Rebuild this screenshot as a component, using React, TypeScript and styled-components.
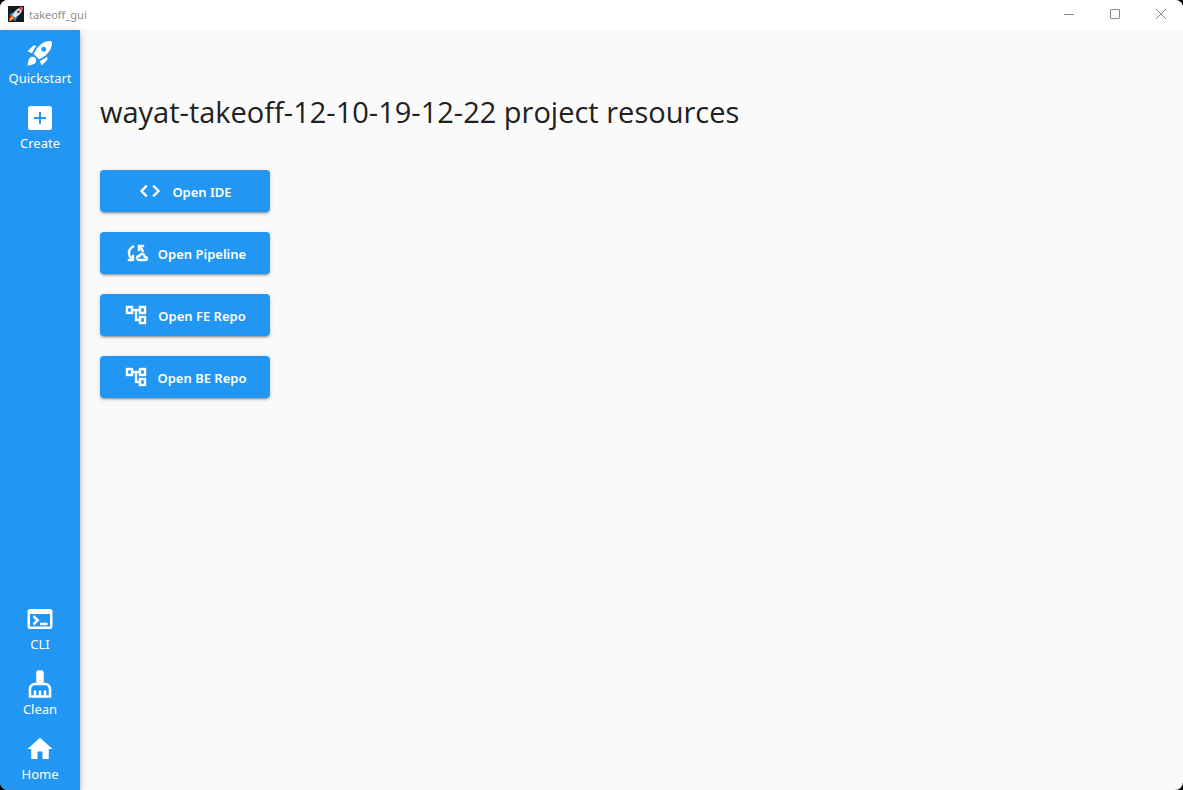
import React from 'react';
import styled, { createGlobalStyle } from 'styled-components';
import {
  MdCode,
  MdHome,
  MdOutlineAccountTree,
  MdOutlineCloudSync,
  MdRocketLaunch,
  MdTerminal,
  MdCleaningServices,
} from 'react-icons/md';

const GlobalStyle = createGlobalStyle`
  *, *::before, *::after { box-sizing: border-box; }
  body {
    margin: 0;
    background: #000;
    font-family: "Segoe UI", "Open Sans", "Noto Sans", sans-serif;
  }
`;

const Window = styled.div`
  display: flex;
  flex-direction: column;
  min-height: 100vh;
  overflow: hidden;
  border-radius: 8px;
  background: #fafafa;
`;

const TitleBar = styled.header`
  display: flex;
  align-items: center;
  height: 30px;
  padding-left: 8px;
  background: #fff;
  color: #8f8f8f;

  > svg {
    margin-bottom: 2px;
  }
`;

const AppName = styled.span`
  flex: 1;
  margin-left: 5px;
  font-family: "Noto Sans", sans-serif;
  font-size: 11px;
  line-height: 16px;
`;

const CaptionButton = styled.button`
  display: flex;
  align-items: center;
  justify-content: center;
  width: 46px;
  height: 30px;
  padding: 0 0 2px 2px;
  border: 0;
  background: none;
  color: #8a8a8a;
`;

const Body = styled.div`
  display: flex;
  flex: 1;
`;

const Sidebar = styled.nav`
  display: flex;
  flex-direction: column;
  justify-content: space-between;
  width: 80px;
  background: #2196f3;
  box-shadow: 0 2px 4px -1px rgba(0, 0, 0, 0.2), 0 4px 5px rgba(0, 0, 0, 0.14),
    0 1px 10px rgba(0, 0, 0, 0.12);
`;

const NavGroup = styled.div`
  display: flex;
  flex-direction: column;
`;

const NavItem = styled.button<{ $inset: number }>`
  display: flex;
  flex-direction: column;
  align-items: center;
  height: 65px;
  padding: ${({ $inset }) => $inset}px 0 0;
  border: 0;
  background: none;
  color: #fff;
  font-family: "Noto Sans", sans-serif;
  font-size: 13px;
  line-height: 20px;
  cursor: pointer;
`;

const Main = styled.main`
  flex: 1;
  padding: 60px 20px 20px;
`;

const Heading = styled.h1`
  margin: 0 0 36px;
  color: #212121;
  font-size: 29px;
  font-weight: 400;
  line-height: 44px;
`;

const Actions = styled.div`
  display: flex;
  flex-direction: column;
  align-items: flex-start;
  gap: 20px;
`;

const ActionButton = styled.button`
  display: flex;
  align-items: center;
  justify-content: center;
  gap: 10px;
  width: 170px;
  height: 42px;
  padding: 0;
  border: 0;
  border-radius: 4px;
  background: #2196f3;
  box-shadow: 0 3px 1px -2px rgba(0, 0, 0, 0.2), 0 2px 2px rgba(0, 0, 0, 0.14),
    0 1px 5px rgba(0, 0, 0, 0.12);
  color: #fff;
  font-family: "Noto Sans", sans-serif;
  font-size: 13px;
  font-weight: 600;
  line-height: 20px;
  cursor: pointer;

  svg {
    stroke: #fff;
    stroke-width: 0.4px;
  }

  svg [fill='none'] {
    stroke: none;
  }
`;

const ActionLabel = styled.span`
  padding-top: 2px;
`;

const AddBoxIcon = ({ size }: { size: number }) => (
  <svg width={size} height={size} viewBox="0 0 30 30" fill="currentColor" aria-hidden="true">
    <path
      fillRule="evenodd"
      d="M5.500 3h19A2.500 2.500 0 0 1 27 5.500v19a2.500 2.500 0 0 1-2.500 2.500h-19A2.500 2.500 0 0 1 3 24.500v-19A2.500 2.500 0 0 1 5.500 3zM14 9v5H9v2h5v5h2v-5h5v-2h-5V9z"
    />
  </svg>
);

type Entry = { label: string; icon: React.ComponentType<{ size: number }> };

const topItems: Entry[] = [
  { label: 'Quickstart', icon: MdRocketLaunch },
  { label: 'Create', icon: AddBoxIcon },
];

const bottomItems: Entry[] = [
  { label: 'CLI', icon: MdTerminal },
  { label: 'Clean', icon: MdCleaningServices },
  { label: 'Home', icon: MdHome },
];

const actions: Entry[] = [
  { label: 'Open IDE', icon: MdCode },
  { label: 'Open Pipeline', icon: MdOutlineCloudSync },
  { label: 'Open FE Repo', icon: MdOutlineAccountTree },
  { label: 'Open BE Repo', icon: MdOutlineAccountTree },
];

const AppLogo = () => (
  <svg width="16" height="16" viewBox="0 0 16 16" aria-hidden="true">
    <rect width="16" height="16" fill="#17191c" />
    <path d="M5 6 1.6 8.6 2 10.4 5.4 9zM9.6 10.4 7.4 15 5.6 14.6 6.6 11z" fill="#1e88d2" />
    <path d="M4 9.6C2 10.4 1 12.4.8 15.2 3.4 15 5.6 14 6.4 12z" fill="#f4511e" />
    <path d="M4.2 10.8C3 11.4 2.2 12.4 2 14c1.6-.2 2.6-.8 3.2-2z" fill="#ffca28" />
    <path d="M15 1C10.6 1.4 7 4 4.2 9.4l2.4 2.4C12 9.2 14.6 5.6 15 1z" fill="#dfe6ea" />
    <path d="M15 1c-1.6.1-3 .5-4.2 1.2l3 3C14.5 4 14.9 2.6 15 1z" fill="#d84343" />
    <circle cx="10.4" cy="5.8" r="1.5" fill="#d84343" />
    <circle cx="10.4" cy="5.8" r=".8" fill="#263c4c" />
  </svg>
);

const NavList = ({ items, inset }: { items: Entry[]; inset: number }) => (
  <NavGroup>
    {items.map(({ label, icon: Icon }) => (
      <NavItem key={label} type="button" $inset={inset}>
        <Icon size={30} />
        {label}
      </NavItem>
    ))}
  </NavGroup>
);

export default function App() {
  return (
    <>
      <GlobalStyle />
      <Window>
        <TitleBar>
          <AppLogo />
          <AppName>takeoff_gui</AppName>
          <CaptionButton type="button" aria-label="Minimize">
            <svg width="10" height="10" viewBox="0 0 10 10" fill="none" stroke="currentColor">
              <path d="M0 5.5h10" />
            </svg>
          </CaptionButton>
          <CaptionButton type="button" aria-label="Maximize">
            <svg width="10" height="10" viewBox="0 0 10 10" fill="none" stroke="currentColor">
              <rect x=".5" y=".5" width="9" height="9" rx=".5" />
            </svg>
          </CaptionButton>
          <CaptionButton type="button" aria-label="Close">
            <svg width="10" height="10" viewBox="0 0 10 10" fill="none" stroke="currentColor">
              <path d="M0 0l10 10M10 0L0 10" />
            </svg>
          </CaptionButton>
        </TitleBar>
        <Body>
          <Sidebar>
            <NavList items={topItems} inset={8} />
            <NavList items={bottomItems} inset={9} />
          </Sidebar>
          <Main>
            <Heading>wayat-takeoff-12-10-19-12-22 project resources</Heading>
            <Actions>
              {actions.map(({ label, icon: Icon }) => (
                <ActionButton key={label} type="button">
                  <Icon size={24} />
                  <ActionLabel>{label}</ActionLabel>
                </ActionButton>
              ))}
            </Actions>
          </Main>
        </Body>
      </Window>
    </>
  );
}
